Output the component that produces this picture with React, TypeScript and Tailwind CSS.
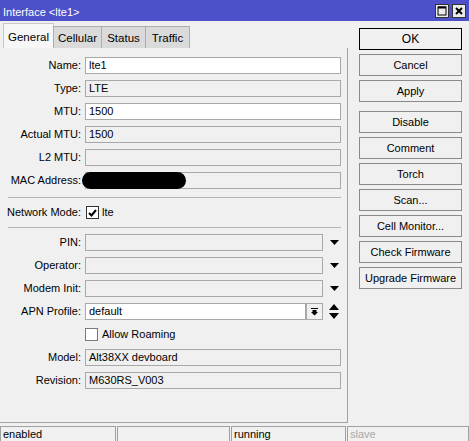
import type { ReactNode } from "react";

const fieldBase = "h-[17px] border border-[#a8a8a8] px-[3px] leading-[15px] whitespace-nowrap overflow-hidden";

function Field({ value, editable, width = "w-[256px]" }: { value?: string; editable?: boolean; width?: string }) {
  return <div className={`${fieldBase} ${width} ${editable ? "bg-white" : "bg-[#f0f0f0]"}`}>{value}</div>;
}

function Row({ label, children }: { label: string; children: ReactNode }) {
  return (
    <div className="flex h-[17px] items-center">
      <div className="mr-[4px] w-[81px] text-right whitespace-nowrap">{label}</div>
      {children}
    </div>
  );
}

function DropArrow() {
  return (
    <svg width="9" height="5" viewBox="0 0 9 5" className="ml-[7px]">
      <path d="M0 0h9L4.5 5z" fill="#000" />
    </svg>
  );
}

function CheckBox({ checked }: { checked?: boolean }) {
  return (
    <div
      className={`flex h-[13px] w-[13px] items-center justify-center border bg-white ${
        checked ? "border-[#333]" : "border-[#7a7a7a]"
      }`}
    >
      {checked ? (
        <svg width="9" height="8" viewBox="0 0 9 8">
          <path d="M1 4l2.5 2.5L8 1" stroke="#000" strokeWidth="2" fill="none" />
        </svg>
      ) : null}
    </div>
  );
}

function Separator({ className = "" }: { className?: string }) {
  return <div className={`mx-[8px] h-px w-[333px] bg-[#b4b4b4] ${className}`} />;
}

const TABS = [
  { name: "General", w: "w-[51px]" },
  { name: "Cellular", w: "w-[49px]" },
  { name: "Status", w: "w-[45px]" },
  { name: "Traffic", w: "w-[45px]" },
];

const BUTTONS = ["Disable", "Comment", "Torch", "Scan...", "Cell Monitor...", "Check Firmware", "Upgrade Firmware"];

function Btn({ label, primary }: { label: string; primary?: boolean }) {
  return (
    <div
      className={`flex h-[22px] w-[103px] items-center justify-center bg-[#f0f0f0] border ${
        primary ? "border-black text-[12px]" : "border-[#8a8a8a]"
      }`}
    >
      {label}
    </div>
  );
}

export default function App() {
  return (
    <div className="flex h-[441px] w-[469px] flex-col overflow-hidden bg-[#f0f0f0] font-['Liberation_Sans',Arial,sans-serif] text-[11px] text-black">
      {/* title bar */}
      <div className="flex h-[21px] items-center bg-[#4c50c9] pl-[3px] pr-[3px]">
        <div className="flex-1 pt-[3px] text-white">Interface &lt;lte1&gt;</div>
        <div className="flex gap-[3px]">
          <div className="flex h-[14px] w-[14px] items-center justify-center border border-[#333] bg-[#ececec]">
            <svg width="10" height="10" viewBox="0 0 10 10">
              <rect x="1" y="1" width="8" height="8" fill="none" stroke="#000" strokeWidth="1" />
              <path d="M1 1.5h8" stroke="#000" strokeWidth="2" />
            </svg>
          </div>
          <div className="flex h-[14px] w-[14px] items-center justify-center border border-[#333] bg-[#ececec]">
            <svg width="8" height="8" viewBox="0 0 8 8">
              <path d="M1 1l6 6M7 1L1 7" stroke="#000" strokeWidth="2" />
            </svg>
          </div>
        </div>
      </div>

      <div className="flex min-h-0 flex-1">
        {/* tab area */}
        <div className="flex w-[348px] flex-col">
          <div className="flex h-[27px] items-end pl-[3px]">
            {TABS.map((t, i) =>
              i === 0 ? (
                <div
                  key={t.name}
                  className={`${t.w} flex h-[25px] items-start justify-center border-x border-t border-[#c8c8c8] bg-[#f7f7f7] pt-[5px] text-[11.5px]`}
                >
                  {t.name}
                </div>
              ) : (
                <div
                  key={t.name}
                  className={`${t.w} -ml-px flex h-[22px] items-center justify-center border-x border-t border-[#adadad] bg-[#dadada] pt-[2px] text-[11.5px]`}
                >
                  {t.name}
                </div>
              ),
            )}
          </div>

          <div className="flex flex-1 flex-col gap-[6px] border-r border-b border-[#a0a0a0] pt-[9px]">
            <Row label="Name:">
              <Field value="lte1" editable />
            </Row>
            <Row label="Type:">
              <Field value="LTE" />
            </Row>
            <Row label="MTU:">
              <Field value="1500" editable />
            </Row>
            <Row label="Actual MTU:">
              <Field value="1500" />
            </Row>
            <Row label="L2 MTU:">
              <Field />
            </Row>
            <div className="flex h-[17px] items-center">
              <div className="mr-[4px] w-[81px] text-right whitespace-nowrap">MAC Address:</div>
              <div className="relative">
                <Field />
                <div className="absolute left-[-3px] top-0 h-[17px] w-[104px] rounded-full bg-black" />
              </div>
            </div>

            <Separator className="mt-[2px]" />

            <div className="flex h-[17px] items-center">
              <div className="mr-[5px] w-[81px] text-right whitespace-nowrap">Network Mode:</div>
              <CheckBox checked />
              <span className="ml-[3px]">lte</span>
            </div>

            <Separator />

            <Row label="PIN:">
              <Field width="w-[238px]" />
              <DropArrow />
            </Row>
            <Row label="Operator:">
              <Field width="w-[238px]" />
              <DropArrow />
            </Row>
            <Row label="Modem Init:">
              <Field width="w-[238px]" />
              <DropArrow />
            </Row>
            <Row label="APN Profile:">
              <Field value="default" editable width="w-[221px]" />
              <div className="flex h-[17px] w-[17px] items-center justify-center border border-[#a8a8a8] bg-[#f0f0f0]">
                <svg width="7" height="8" viewBox="0 0 7 8">
                  <path d="M0 0.5h7" stroke="#000" strokeWidth="1" />
                  <path d="M1.5 2h4v2h1.5L3.5 7.5 0 4h1.5z" fill="#000" />
                </svg>
              </div>
              <svg width="10" height="15" viewBox="0 0 10 15" className="ml-[6px]">
                <path d="M5 0l5 6H0zM0 9h10l-5 6z" fill="#000" />
              </svg>
            </Row>
            <div className="flex h-[17px] items-center pl-[85px]">
              <CheckBox />
              <span className="ml-[4px]">Allow Roaming</span>
            </div>
            <Row label="Model:">
              <Field value="Alt38XX devboard" />
            </Row>
            <Row label="Revision:">
              <Field value="M630RS_V003" />
            </Row>
          </div>
        </div>

        {/* buttons */}
        <div className="flex flex-col pl-[11px] pt-[7px]">
          <div className="flex flex-col gap-[4px]">
            <Btn label="OK" primary />
            <Btn label="Cancel" />
            <Btn label="Apply" />
          </div>
          <div className="mt-[9px] flex flex-col gap-[4px]">
            {BUTTONS.map((b) => (
              <Btn key={b} label={b} />
            ))}
          </div>
        </div>
      </div>

      {/* status bar */}
      <div className="flex h-[18px] gap-px pt-[3px]">
        <div className="w-[116px] border-x border-t border-[#a0a0a0] pl-[2px] leading-[14px]">enabled</div>
        <div className="w-[113px] border-x border-t border-[#a0a0a0]" />
        <div className="w-[115px] border-x border-t border-[#a0a0a0] pl-[2px] leading-[14px]">running</div>
        <div className="w-[122px] border-x border-t border-[#a0a0a0] pl-[2px] leading-[14px] text-[#a8a8a8]">slave</div>
      </div>
    </div>
  );
}
